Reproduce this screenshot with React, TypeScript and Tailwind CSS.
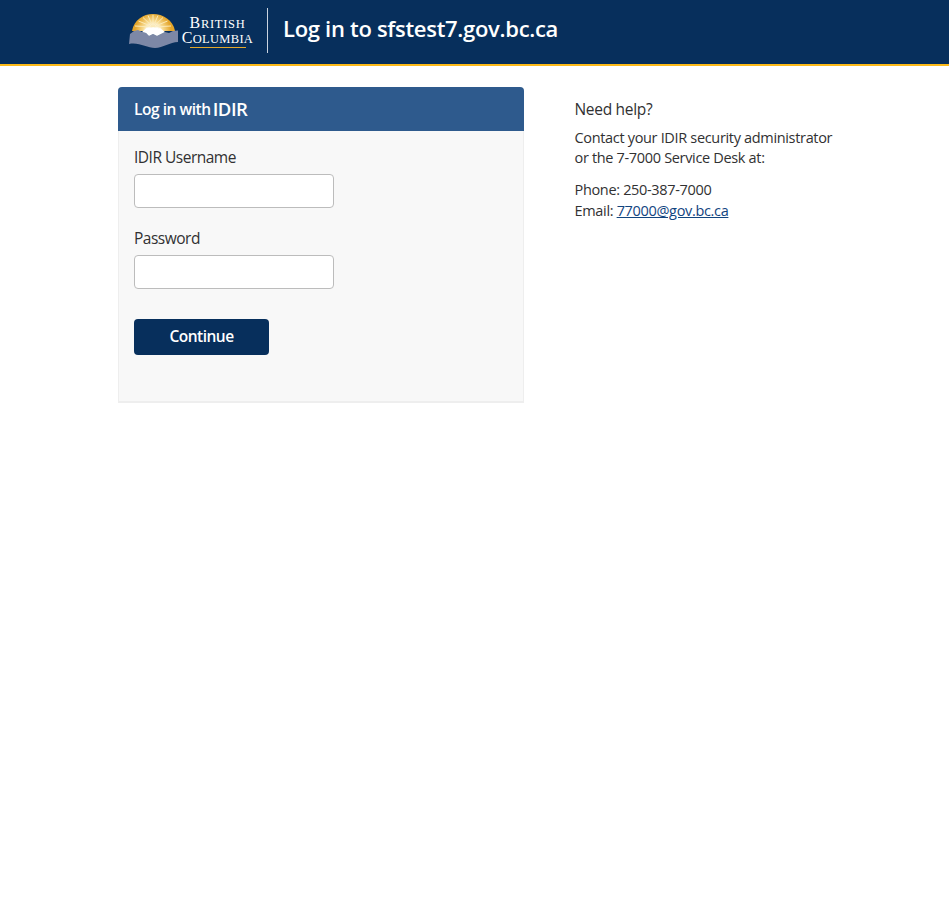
import React from 'react';

const BcLogo = () => (
  <svg width="50" height="35" viewBox="0 0 50 35" className="block shrink-0">
    <defs>
      <radialGradient id="sun" gradientUnits="userSpaceOnUse" cx="24" cy="18" r="18">
        <stop offset="0.3" stopColor="#ffffff" />
        <stop offset="0.55" stopColor="#f8dc94" />
        <stop offset="1" stopColor="#e4a52a" />
      </radialGradient>
    </defs>
    <path d="M3 18 C5 7 14 1 24 1 C34 1 44 7 46 18 Z" fill="url(#sun)" />
    <g stroke="#fbeab8" strokeWidth="1">
      <path d="M24 14 L24 2" />
      <path d="M24 14 L19 2.500" />
      <path d="M24 14 L29 2.500" />
      <path d="M24 14 L14 4.500" />
      <path d="M24 14 L34 4.500" />
      <path d="M24 14 L9.500 8" />
      <path d="M24 14 L38.500 8" />
      <path d="M24 14 L6 13" />
      <path d="M24 14 L42 13" />
    </g>
    <path d="M1 21 L5 18 L9 17 L13 19 L17 20 L20 23 L24 21 L28 23 L32 21 L36 19 L40 20 L44 18 L49 17.500 L49 29 C41 29 34 35 26 35 C18 35 10 29 0 31 Z" fill="#7d88a6" />
    <path d="M13 19 L18 14.500 L21 16.500 L24 14 L28 16.500 L31 15 L36 19 L32 21 L28 23 L24 21 L20 23 L17 20 Z" fill="#ffffff" />
  </svg>
);

export default function App() {
  return (
    <div className="min-h-[911px] bg-white font-['Open_Sans',sans-serif] text-[#313132]">
      <header className="h-[66px] bg-[#072f5c] border-b-2 border-[#fcba19]">
        <div className="flex items-center h-[61px] pl-[129px]">
          <div className="flex items-center h-[45px] w-[139px] border-r border-[#c9d3df]">
            <BcLogo />
            <div className="mt-[3px] flex flex-col items-center w-[77px] font-['Liberation_Serif',serif] text-white">
              <span className="text-[16px] leading-[14px] tracking-[0.7px]">B<span className="text-[12.500px]">RITISH</span></span>
              <span className="text-[16px] leading-[13px] tracking-[0.3px]">C<span className="text-[12.500px]">OLUMBIA</span></span>
              <span className="block w-[56px] h-px bg-[#e3a82b] mt-[1px]" />
            </div>
          </div>
          <h1 className="ml-[15px] mb-[6px] text-[22px] leading-[28px] tracking-[-0.3px] font-semibold text-white">
            Log in to sfstest7.gov.bc.ca
          </h1>
        </div>
      </header>

      <main className="flex items-start pt-[21px] pl-[118px]">
        <section className="w-[406px] h-[316px] rounded-t-[4px] bg-[#f8f8f8] border-b-2 border-x border-[#eeeeee]">
          <div className="-mx-px flex items-center h-[44px] px-[16px] rounded-t-[4px] bg-[#2e5a8d] text-white">
            <span className="mt-[2px] text-[15.500px] tracking-[-0.45px] font-semibold">Log in with</span>
            <span className="ml-[2px] text-[18.500px] tracking-[-0.5px] font-semibold">IDIR</span>
          </div>
          <form className="px-[15px]">
            <label className="block mt-[15px] mb-[6px] text-[15.500px] leading-[22px] tracking-[-0.5px]">IDIR Username</label>
            <input type="text" className="block w-[200px] h-[34px] bg-white border border-[#bcbcbc] rounded-[4px]" />
            <label className="block mt-[19px] mb-[6px] text-[15.500px] leading-[22px] tracking-[-0.5px]">Password</label>
            <input type="password" className="block w-[200px] h-[34px] bg-white border border-[#bcbcbc] rounded-[4px]" />
            <button type="button" className="block w-[135px] h-[36px] mt-[30px] rounded-[4px] bg-[#072f5c] text-white text-[15.500px] tracking-[-0.5px] font-semibold">
              Continue
            </button>
          </form>
        </section>

        <aside className="ml-[50.500px] pt-[12px] text-[14.500px] leading-[20px] tracking-[-0.33px]">
          <p className="text-[15.500px] tracking-[-0.3px]">Need help?</p>
          <p className="mt-[9px]">Contact your IDIR security administrator<br />or the 7-7000 Service Desk at:</p>
          <p className="mt-[11px] leading-[21px]">
            Phone: 250-387-7000<br />
            Email: <a href="#" className="text-[#12457f] underline">77000@gov.bc.ca</a>
          </p>
        </aside>
      </main>
    </div>
  );
}
